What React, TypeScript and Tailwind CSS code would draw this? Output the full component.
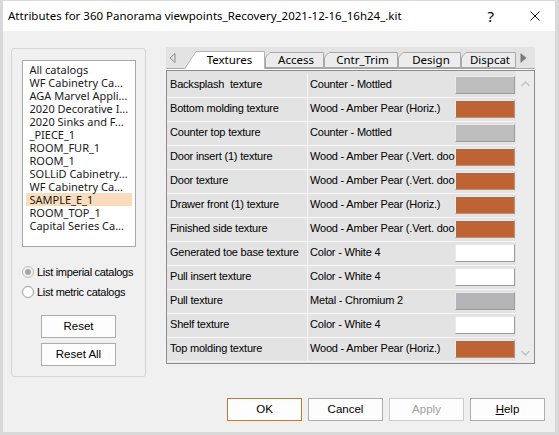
import React from 'react';

const SANS = { fontFamily: '"Noto Sans", "Liberation Sans", sans-serif' };
const MSS = { fontFamily: '"Liberation Sans", Arial, sans-serif' };

const ORANGE = '#be6434';
const MOTTLED = '#bebebe';
const WHITE = '#ffffff';

const catalogs = [
  'All catalogs',
  'WF Cabinetry Ca...',
  'AGA Marvel Appli...',
  '2020 Decorative I...',
  '2020 Sinks and F...',
  '_PIECE_1',
  'ROOM_FUR_1',
  'ROOM_1',
  'SOLLiD Cabinetry...',
  'WF Cabinetry Ca...',
  'SAMPLE_E_1',
  'ROOM_TOP_1',
  'Capital Series Ca...',
];

const rows: [string, string, string][] = [
  ['Backsplash  texture', 'Counter - Mottled', MOTTLED],
  ['Bottom molding texture', 'Wood - Amber Pear (Horiz.)', ORANGE],
  ['Counter top texture', 'Counter - Mottled', MOTTLED],
  ['Door insert (1) texture', 'Wood - Amber Pear (.Vert. door)', ORANGE],
  ['Door texture', 'Wood - Amber Pear (.Vert. door)', ORANGE],
  ['Drawer front (1) texture', 'Wood - Amber Pear (Horiz.)', ORANGE],
  ['Finished side texture', 'Wood - Amber Pear (.Vert. door)', ORANGE],
  ['Generated toe base texture', 'Color - White 4', WHITE],
  ['Pull insert texture', 'Color - White 4', WHITE],
  ['Pull texture', 'Metal - Chromium 2', '#b4b4b9'],
  ['Shelf texture', 'Color - White 4', WHITE],
  ['Top molding texture', 'Wood - Amber Pear (Horiz.)', ORANGE],
];

const tabs = [
  { label: 'Textures', w: 81, active: true },
  { label: 'Access', w: 59 },
  { label: 'Cntr_Trim', w: 74 },
  { label: 'Design', w: 63 },
  { label: 'Dispcat', w: 55 },
];

function Tab({ label, w, active }: { label: string; w: number; active?: boolean }) {
  const h = active ? 18 : 16;
  const slant = active ? 12 : 5;
  return (
    <div
      className={`relative flex shrink-0 items-center justify-center ${active ? 'z-10 -mb-px h-[18px] pl-[10px]' : 'h-[16px] pl-[3px]'}`}
      style={{ width: w }}
    >
      <svg className="absolute inset-0" width={w} height={h}>
        {active ? (
          <path d={`M0.5 ${h} L${slant} 0.5 H${w - 0.5} V${h}`} fill="#fff" stroke="#b4b4b4" />
        ) : (
          <path d={`M0.5 ${h} V${slant} L${slant} 0.5 H${w - 0.5} V${h - 0.5} H0.5`} fill="#ececec" stroke="#a8a8a8" />
        )}
      </svg>
      <span className="relative text-[11.5px] leading-none text-black" style={SANS}>
        {label}
      </span>
    </div>
  );
}

function Button({ label, className = '', children }: { label?: string; className?: string; children?: React.ReactNode }) {
  return (
    <div
      className={`flex h-[23px] w-[75px] items-center justify-center border bg-[#fdfdfd] text-[11.5px] ${className}`}
      style={MSS}
    >
      {children ?? label}
    </div>
  );
}

export default function App() {
  return (
    <div className="h-[435px] w-[559px] bg-[#d9d9d9] pb-[3px] pl-[3px] pr-[4px] pt-[1px]">
      <div className="flex h-full flex-col bg-[#f0f0f0]">
        {/* title bar */}
        <div className="flex h-[30px] shrink-0 items-center bg-white pl-[5px]">
          <span className="text-[11.5px] text-black" style={SANS}>
            Attributes for 360 Panorama viewpoints_Recovery_2021-12-16_16h24_.kit
          </span>
          <span className="ml-auto mr-[36px] text-[15px] text-black" style={SANS}>?</span>
          <svg width="10" height="10" className="mr-[15px]">
            <path d="M0.5 0.5 L9.5 9.5 M9.5 0.5 L0.5 9.5" stroke="#111" strokeWidth="1" />
          </svg>
        </div>

        <div className="flex items-start">
          {/* left group */}
          <div className="ml-[8px] mt-[17px] flex h-[329px] w-[135px] flex-col items-center rounded-[3px] border border-[#d5d5d5]">
            <div className="mt-[11px] h-[187px] w-[114px] border border-[#a8a8a8] bg-white px-[3px] pt-[2px]">
              {catalogs.map((c, i) => (
                <div
                  key={i}
                  className={`h-[13px] whitespace-nowrap pl-[4px] text-[11px] leading-[13px] text-[#1a1a1a] ${c === 'SAMPLE_E_1' ? 'bg-[#f9dcbc]' : ''}`}
                  style={SANS}
                >
                  {c}
                </div>
              ))}
            </div>

            <div className="mt-[18px] flex w-full flex-col gap-[6px] pl-[10px]" style={MSS}>
              <div className="flex h-[14px] items-center gap-[3px] text-[11px] tracking-[-0.3px] text-black">
                <span className="flex h-[12px] w-[12px] items-center justify-center rounded-full border border-[#bcbcbc] bg-[#f0f0f0]">
                  <span className="h-[6px] w-[6px] rounded-full bg-[#a6a6a6]" />
                </span>
                List imperial catalogs
              </div>
              <div className="flex h-[14px] items-center gap-[3px] text-[11px] tracking-[-0.3px] text-black">
                <span className="h-[12px] w-[12px] rounded-full border border-[#9a9a9a] bg-white" />
                List metric catalogs
              </div>
            </div>

            <div className="mt-[16px] flex flex-col gap-[5px]">
              <Button label="Reset" className="border-[#adadad] text-black" />
              <Button label="Reset All" className="border-[#adadad] text-black" />
            </div>
          </div>

          {/* right: tabs + table */}
          <div className="ml-[20px] mt-[16px] w-[369px]">
            <div className="flex h-[22px] items-end border-b border-[#a8a8a8] bg-[#e3e3e3]">
              <div className="flex h-full w-[18px] items-center pl-[3px]">
                <svg width="7" height="10">
                  <path d="M6 0.5 L1 5 L6 9.5 Z" fill="none" stroke="#8a8a8a" />
                </svg>
              </div>
              {tabs.map((t) => (
                <Tab key={t.label} {...t} />
              ))}
              <div className="flex h-full items-center pl-[4px]">
                <svg width="7" height="10">
                  <path d="M0.5 0 L6.5 5 L0.5 10 Z" fill="#7a7a7a" />
                </svg>
              </div>
            </div>
            <div className="h-[1px] bg-white" />

            <div className="flex h-[294px] border border-[#8c8c8c] bg-[#e3e3e3]" style={MSS}>
              <div className="min-w-0 flex-1 pt-[3px]">
                {rows.map(([label, value, color], i) => (
                  <div key={i} className="flex h-[24px] border-b border-[#f6f6f6]">
                    <div className="w-[141px] shrink-0 whitespace-pre border-r border-[#f6f6f6] pl-[3px] pt-[2px] text-[11px] tracking-[-0.2px] text-black">
                      {label}
                    </div>
                    <div className="min-w-0 flex-1 overflow-hidden whitespace-nowrap pl-[2px] pt-[2px] text-[11px] tracking-[-0.2px] text-black">
                      {value}
                    </div>
                    <div className="w-[61px] shrink-0 pt-[2px]">
                      <div
                        className="h-[18px] w-[60px] border border-b-[#9c9c9c] border-l-[#e9e9e9] border-r-[#9c9c9c] border-t-[#e9e9e9]"
                        style={{ backgroundColor: color }}
                      />
                    </div>
                  </div>
                ))}
              </div>
              <div className="flex w-[18px] shrink-0 flex-col items-center justify-between bg-[#ececec] pb-[7px] pt-[10px]">
                <svg width="9" height="6">
                  <path d="M0.5 5 L4.5 1 L8.5 5" fill="none" stroke="#c4c4c4" strokeWidth="1.5" />
                </svg>
                <svg width="9" height="6">
                  <path d="M0.5 1 L4.5 5 L8.5 1" fill="none" stroke="#c4c4c4" strokeWidth="1.5" />
                </svg>
              </div>
            </div>
          </div>
        </div>

        {/* bottom buttons */}
        <div className="mb-[11px] mr-[10px] mt-auto flex justify-end gap-[6px]">
          <Button label="OK" className="border-[#c27a2c] text-black" />
          <Button label="Cancel" className="border-[#adadad] text-black" />
          <Button label="Apply" className="border-[#cccccc] text-[#a0a0a0]" />
          <Button className="border-[#adadad] text-black">
            <span>
              <span className="underline">H</span>elp
            </span>
          </Button>
        </div>
      </div>
    </div>
  );
}
